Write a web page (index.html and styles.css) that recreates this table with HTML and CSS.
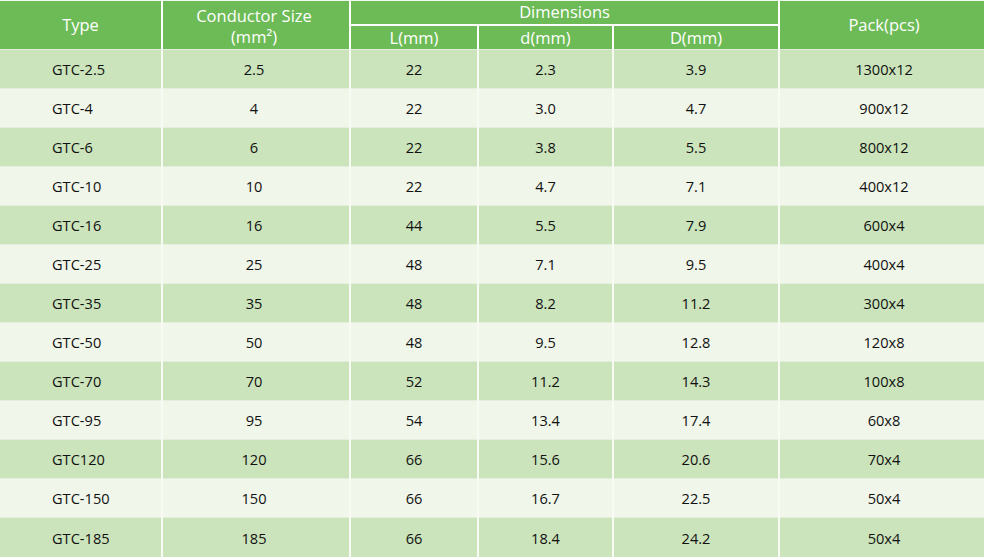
FILE: index.html
```html
<!DOCTYPE html>
<html>
<head>
<meta charset="utf-8">
<link rel="stylesheet" href="styles.css">
</head>
<body>
<table class="spec">
  <colgroup>
    <col class="c1"><col class="c2"><col class="c3"><col class="c4"><col class="c5"><col class="c6">
  </colgroup>
  <thead>
    <tr class="h1">
      <th rowspan="2">Type</th>
      <th rowspan="2" class="two">Conductor Size<br>(mm²)</th>
      <th colspan="3" class="dim">Dimensions</th>
      <th rowspan="2" class="pack">Pack(pcs)</th>
    </tr>
    <tr class="h2">
      <th>L(mm)</th><th>d(mm)</th><th>D(mm)</th>
    </tr>
  </thead>
  <tbody>
    <tr><td class="type">GTC-2.5</td><td>2.5</td><td>22</td><td>2.3</td><td>3.9</td><td>1300x12</td></tr>
    <tr><td class="type">GTC-4</td><td>4</td><td>22</td><td>3.0</td><td>4.7</td><td>900x12</td></tr>
    <tr><td class="type">GTC-6</td><td>6</td><td>22</td><td>3.8</td><td>5.5</td><td>800x12</td></tr>
    <tr><td class="type">GTC-10</td><td>10</td><td>22</td><td>4.7</td><td>7.1</td><td>400x12</td></tr>
    <tr><td class="type">GTC-16</td><td>16</td><td>44</td><td>5.5</td><td>7.9</td><td>600x4</td></tr>
    <tr><td class="type">GTC-25</td><td>25</td><td>48</td><td>7.1</td><td>9.5</td><td>400x4</td></tr>
    <tr><td class="type">GTC-35</td><td>35</td><td>48</td><td>8.2</td><td>11.2</td><td>300x4</td></tr>
    <tr><td class="type">GTC-50</td><td>50</td><td>48</td><td>9.5</td><td>12.8</td><td>120x8</td></tr>
    <tr><td class="type">GTC-70</td><td>70</td><td>52</td><td>11.2</td><td>14.3</td><td>100x8</td></tr>
    <tr><td class="type">GTC-95</td><td>95</td><td>54</td><td>13.4</td><td>17.4</td><td>60x8</td></tr>
    <tr><td class="type">GTC120</td><td>120</td><td>66</td><td>15.6</td><td>20.6</td><td>70x4</td></tr>
    <tr><td class="type">GTC-150</td><td>150</td><td>66</td><td>16.7</td><td>22.5</td><td>50x4</td></tr>
    <tr><td class="type">GTC-185</td><td>185</td><td>66</td><td>18.4</td><td>24.2</td><td>50x4</td></tr>
  </tbody>
</table>
</body>
</html>
```

FILE: styles.css
```css
html, body {
  margin: 0;
  padding: 0;
  background: #ffffff;
}

.spec {
  width: 984px;
  border-collapse: collapse;
  table-layout: fixed;
  font-family: "Open Sans", "Liberation Sans", sans-serif;
  color: #111111;
  border-top: 1px solid #f3f8ef;
}

.c1 { width: 162px; }
.c2 { width: 188px; }
.c3 { width: 128px; }
.c4 { width: 135px; }
.c5 { width: 166px; }
.c6 { width: 205px; }

.spec th {
  background: #6dbb56;
  color: #ffffff;
  font-weight: normal;
  font-size: 16.5px;
  line-height: 20px;
  padding: 0;
  text-align: center;
  vertical-align: middle;
  border-left: 2px solid #ffffff;
}

.spec th:first-child { border-left: none; }

.h1 th { height: 23px; }
.h2 th { height: 23px; border-top: 2px solid #ffffff; }
.h2 th:first-child { border-left: 2px solid #ffffff; }

.spec th.dim { line-height: 22px; vertical-align: top; }
.spec th.two { line-height: 21px; padding-top: 1px; padding-right: 4px; }
.spec th.pack { padding-left: 4px; }

.spec td {
  height: 38px;
  padding: 0;
  font-size: 14.6px;
  text-align: center;
  vertical-align: middle;
  border-left: 2px solid #f7fbf4;
  border-top: 1px solid #e4f0dc;
}

.spec td:first-child { border-left: none; }
.spec td:nth-child(2) { padding-right: 4px; }
.spec td:last-child { padding-left: 4px; }

.spec td.type {
  text-align: left;
  padding-left: 52px;
}

.spec tbody tr:last-child td { height: 39px; }

.spec tbody tr:nth-child(odd) td { background: #cbe4bb; }
.spec tbody tr:nth-child(even) td { background: #f0f6e9; }
```
